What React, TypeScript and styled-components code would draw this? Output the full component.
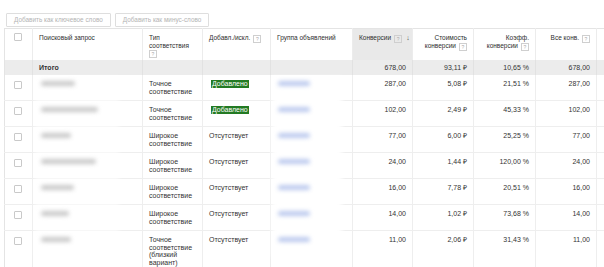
import React from "react";
import styled, { createGlobalStyle } from "styled-components";

const GlobalStyle = createGlobalStyle`
  html, body { margin: 0; padding: 0; background: #fff; overflow: hidden; }
  body { font-family: "Liberation Sans", Arial, sans-serif; color: #333; }
`;

const Page = styled.div`
  padding: 13px 0 0 4px;
  width: 660px;
`;

const Toolbar = styled.div`
  display: flex;
  gap: 4px;
  margin-left: 2px;
  margin-bottom: 1px;
`;

const Button = styled.button`
  height: 14px;
  padding: 0 7px;
  border: 1px solid #dedede;
  border-radius: 1px;
  background: #fff;
  color: #b4b4b4;
  font-family: inherit;
  font-size: 6.4px;
  line-height: 12px;
  white-space: nowrap;
`;

const TableWrap = styled.div`
  position: relative;
`;

const Table = styled.table`
  width: 650px;
  border-collapse: collapse;
  table-layout: fixed;
  border-left: 1px solid #e4e4e4;
  border-top: 1px solid #e4e4e4;
  font-size: 7px;
  line-height: 7.5px;
`;

const HeadCell = styled.th<{ $right?: boolean; $sorted?: boolean }>`
  height: 26px;
  padding: 5px 6px 0;
  vertical-align: top;
  text-align: ${(p) => (p.$right ? "right" : "left")};
  font-weight: normal;
  font-size: 6.5px;
  color: #2e2e2e;
  background: ${(p) => (p.$sorted ? "#e9e9e9" : "#fff")};
  border-right: 1px solid #ececec;
`;

const NoWrap = styled.span`
  white-space: nowrap;
`;

const TotalCell = styled.td<{ $right?: boolean; $bold?: boolean }>`
  height: 15px;
  padding: 0 6px;
  background: #ececec;
  text-align: ${(p) => (p.$right ? "right" : "left")};
  font-weight: ${(p) => (p.$bold ? 700 : 400)};
  vertical-align: middle;
  border-right: 1px solid #e2e2e2;
  color: #333;
`;

const Cell = styled.td<{ $right?: boolean }>`
  padding: 5px 6px 5px;
  vertical-align: top;
  text-align: ${(p) => (p.$right ? "right" : "left")};
  border-right: 1px solid #eeeeee;
  border-bottom: 1px solid #eeeeee;
  color: #333;
`;

const CheckCell = styled(Cell)`
  padding: 6px 0 0 9px;
`;

const CheckHead = styled(HeadCell)`
  padding: 4px 0 0 9px;
`;

const Checkbox = styled.span`
  display: block;
  width: 6px;
  height: 6px;
  border: 1px solid #c9c9c9;
  border-radius: 1px;
  background: #fff;
`;

const Help = styled.span`
  display: inline-block;
  width: 6px;
  height: 6px;
  margin-left: 3px;
  border: 1px solid #cfcfcf;
  color: #aaa;
  font-size: 5px;
  line-height: 6px;
  text-align: center;
  vertical-align: -1px;
`;

const HelpBlock = styled(Help)`
  margin: 1px 0 0;
`;

const SortArrow = styled.span`
  display: inline-block;
  margin-left: 4px;
  font-size: 7px;
  font-weight: 700;
  color: #555;
`;

const Badge = styled.span`
  display: inline-block;
  padding: 0 1px;
  background: #237a23;
  color: #fff;
  line-height: 8px;
  margin-left: 2px;
`;

const Blur = styled.span<{ $w: number; $blue?: boolean }>`
  position: relative;
  z-index: 2;
  display: block;
  width: ${(p) => p.$w}px;
  height: 5px;
  margin-top: 1px;
  margin-left: ${(p) => (p.$blue ? 1 : 2)}px;
  border-radius: 3px;
  background: ${(p) => (p.$blue ? "#bccaee" : "#c9c9c9")};
  filter: blur(2px);
`;

const Patch = styled.div<{ $left: number; $width: number; $alpha: number }>`
  position: absolute;
  z-index: 1;
  left: ${(p) => p.$left}px;
  top: 49px;
  width: ${(p) => p.$width}px;
  height: 180px;
  background: rgba(255, 255, 255, ${(p) => p.$alpha});
  filter: blur(2px);
  pointer-events: none;
`;

type Row = {
  q: number;
  g: number;
  type: string[];
  added: boolean;
  conv: string;
  cost: string;
  rate: string;
  all: string;
};

const rows: Row[] = [
  { q: 34, g: 32, type: ["Точное", "соответствие"], added: true, conv: "287,00", cost: "5,08 ₽", rate: "21,51 %", all: "287,00" },
  { q: 57, g: 32, type: ["Точное", "соответствие"], added: true, conv: "102,00", cost: "2,49 ₽", rate: "45,33 %", all: "102,00" },
  { q: 30, g: 32, type: ["Широкое", "соответствие"], added: false, conv: "77,00", cost: "6,00 ₽", rate: "25,25 %", all: "77,00" },
  { q: 55, g: 32, type: ["Широкое", "соответствие"], added: false, conv: "24,00", cost: "1,44 ₽", rate: "120,00 %", all: "24,00" },
  { q: 33, g: 32, type: ["Широкое", "соответствие"], added: false, conv: "16,00", cost: "7,78 ₽", rate: "20,51 %", all: "16,00" },
  { q: 28, g: 32, type: ["Широкое", "соответствие"], added: false, conv: "14,00", cost: "1,02 ₽", rate: "73,68 %", all: "14,00" },
  { q: 30, g: 32, type: ["Точное", "соответствие", "(близкий", "вариант)"], added: false, conv: "11,00", cost: "2,06 ₽", rate: "31,43 %", all: "11,00" },
];

const widths = [28, 110, 60, 68, 82, 60, 61, 62, 61, 58];

export default function App() {
  return (
    <>
      <GlobalStyle />
      <Page>
        <Toolbar>
          <Button>Добавить как ключевое слово</Button>
          <Button>Добавить как минус-слово</Button>
        </Toolbar>
        <TableWrap>
          <Table>
            <colgroup>
              {widths.map((w, i) => (
                <col key={i} style={{ width: w }} />
              ))}
            </colgroup>
            <thead>
              <tr>
                <CheckHead>
                  <Checkbox />
                </CheckHead>
                <HeadCell>Поисковый запрос</HeadCell>
                <HeadCell>
                  Тип
                  <br />
                  соответствия
                  <br />
                  <HelpBlock>?</HelpBlock>
                </HeadCell>
                <HeadCell>
                  <NoWrap>
                    Добавл./искл.<Help>?</Help>
                  </NoWrap>
                </HeadCell>
                <HeadCell>Группа объявлений</HeadCell>
                <HeadCell $sorted>
                  <NoWrap>
                    Конверсии<Help>?</Help>
                    <SortArrow>↓</SortArrow>
                  </NoWrap>
                </HeadCell>
                <HeadCell $right>
                  Стоимость
                  <br />
                  <NoWrap>
                    конверсии<Help>?</Help>
                  </NoWrap>
                </HeadCell>
                <HeadCell $right>
                  Коэфф.
                  <br />
                  <NoWrap>
                    конверсии<Help>?</Help>
                  </NoWrap>
                </HeadCell>
                <HeadCell $right>
                  <NoWrap>
                    Все конв.<Help>?</Help>
                  </NoWrap>
                </HeadCell>
                <HeadCell />
              </tr>
            </thead>
            <tbody>
              <tr>
                <TotalCell />
                <TotalCell $bold>Итого</TotalCell>
                <TotalCell />
                <TotalCell />
                <TotalCell />
                <TotalCell $right>678,00</TotalCell>
                <TotalCell $right>93,11 ₽</TotalCell>
                <TotalCell $right>10,65 %</TotalCell>
                <TotalCell $right>678,00</TotalCell>
                <TotalCell />
              </tr>
              {rows.map((r, i) => (
                <tr key={i}>
                  <CheckCell>
                    <Checkbox />
                  </CheckCell>
                  <Cell>
                    <Blur $w={r.q} />
                  </Cell>
                  <Cell>
                    {r.type.map((t, j) => (
                      <React.Fragment key={j}>
                        {j > 0 && <br />}
                        {t}
                      </React.Fragment>
                    ))}
                  </Cell>
                  <Cell>{r.added ? <Badge>Добавлено</Badge> : "Отсутствует"}</Cell>
                  <Cell>
                    <Blur $w={r.g} $blue />
                  </Cell>
                  <Cell $right>{r.conv}</Cell>
                  <Cell $right>{r.cost}</Cell>
                  <Cell $right>{r.rate}</Cell>
                  <Cell $right>{r.all}</Cell>
                  <Cell />
                </tr>
              ))}
            </tbody>
          </Table>
          <Patch $left={268} $width={70} $alpha={0.95} />
          <Patch $left={31} $width={84} $alpha={0.55} />
        </TableWrap>
      </Page>
    </>
  );
}
